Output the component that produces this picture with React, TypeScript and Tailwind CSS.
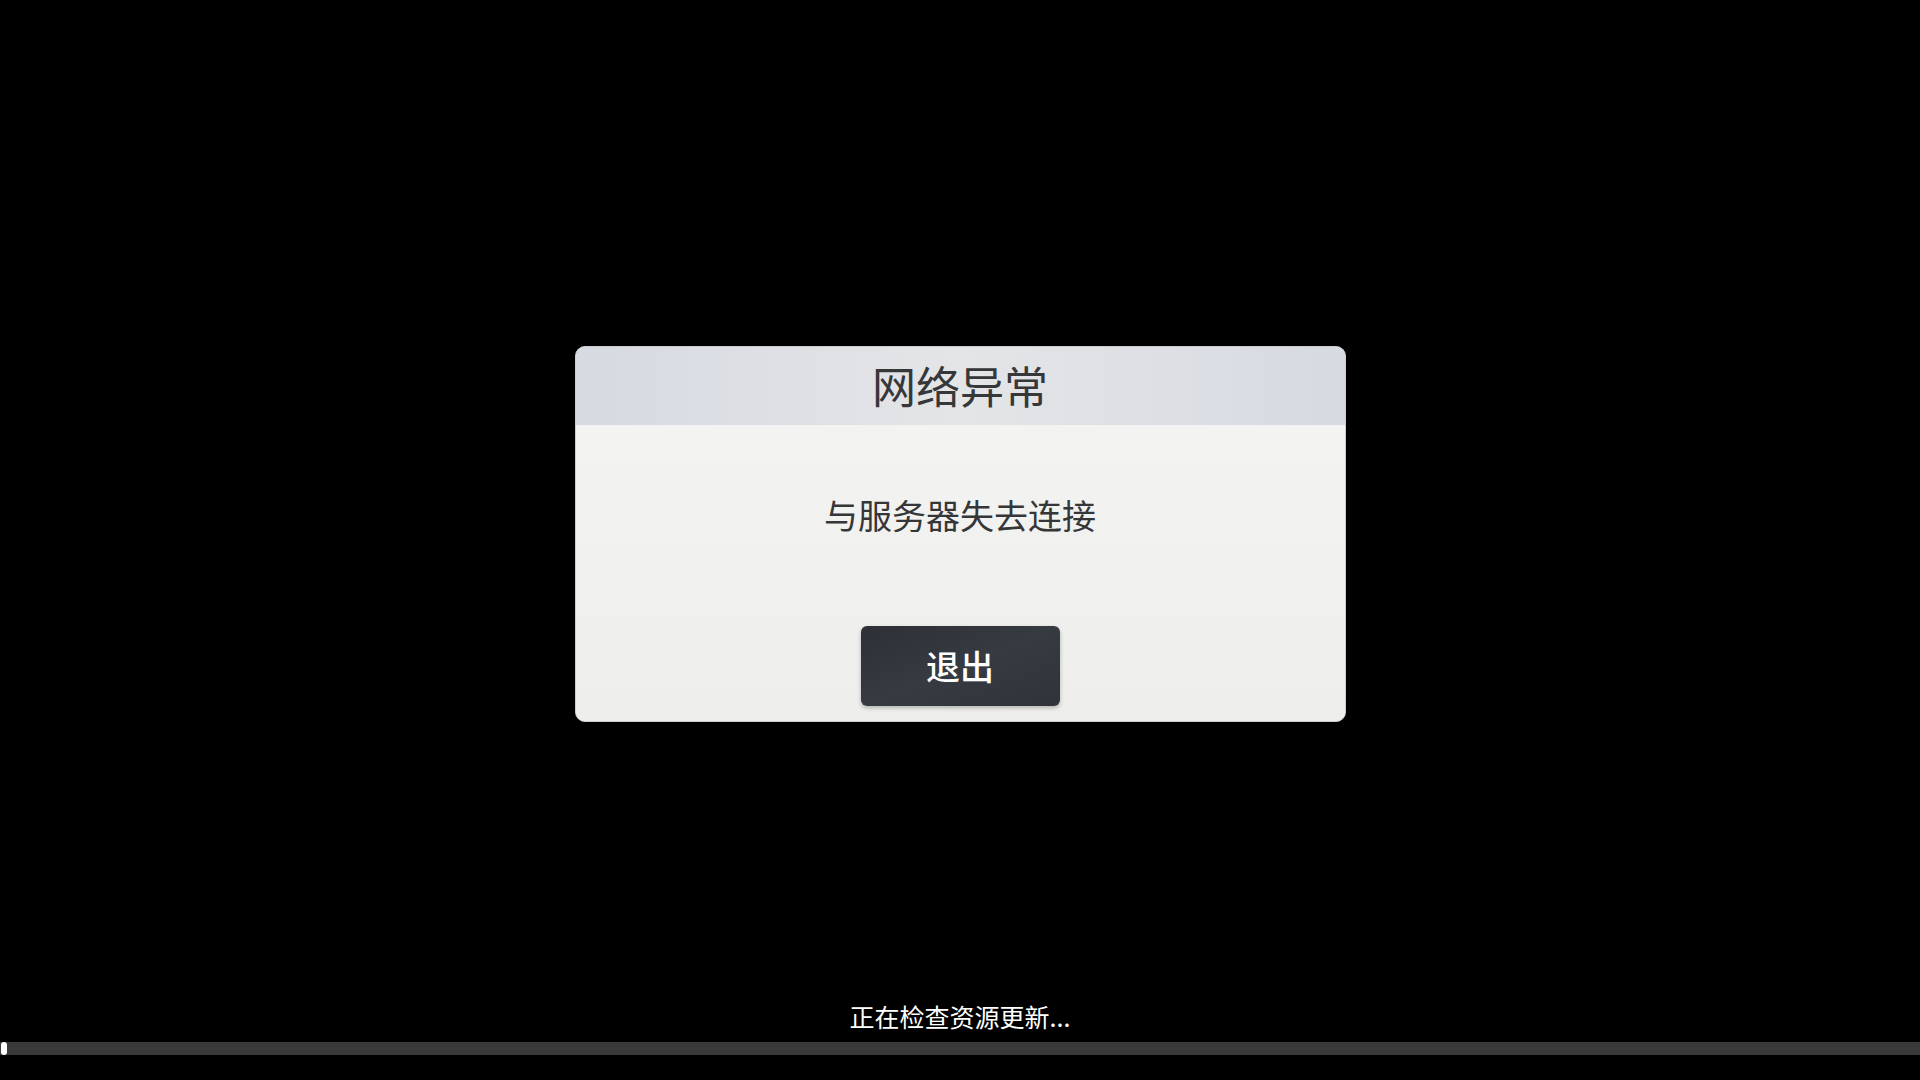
import React from "react";

export default function App() {
  const font = { fontFamily: '"Noto Sans CJK SC", "Noto Sans", sans-serif' };
  return (
    <div
      className="w-full h-[1080px] bg-black flex flex-col items-center overflow-hidden"
      style={font}
    >
      <div className="mt-[346px] w-[771px] h-[376px] rounded-[10px] overflow-hidden flex flex-col border border-[#c9ccd1] bg-[#f0f0ef]">
        <div className="h-[78px] shrink-0 flex items-center justify-center bg-gradient-to-r from-[#d6dae1] via-[#e4e5e7] to-[#d6dae1]">
          <span className="text-[44px] leading-[44px] text-[#363738] -mt-[2px]">网络异常</span>
        </div>
        <div className="flex-1 flex flex-col items-center bg-gradient-to-b from-[#f3f3f2] to-[#eeeeed]">
          <div className="mt-[73px] text-[34px] leading-[34px] text-[#353637]">与服务器失去连接</div>
          <button className="mt-[94px] w-[199px] h-[80px] rounded-[6px] bg-gradient-to-br from-[#2d3036] via-[#363a41] to-[#30343a] flex items-center justify-center shadow-[0_2px_4px_rgba(0,0,0,0.25)]">
            <span className="text-[34px] leading-[34px] font-medium text-white">退出</span>
          </button>
        </div>
      </div>
      <div className="mt-auto w-full flex flex-col items-center pb-[25px]">
        <div className="text-[25px] leading-[25px] text-white">正在检查资源更新...</div>
        <div className="mt-[13px] w-full h-[13px] bg-[#3a3a3a] flex items-center">
          <div className="ml-[1px] w-[6px] h-[13px] rounded-[3px] bg-white" />
        </div>
      </div>
    </div>
  );
}
